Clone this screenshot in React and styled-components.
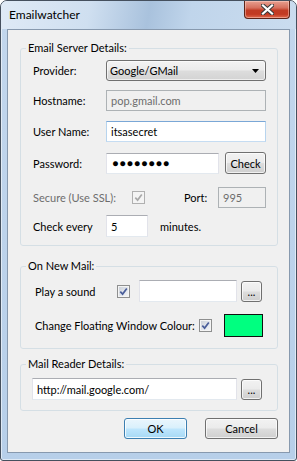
import React from "react";
import styled, { createGlobalStyle, css } from "styled-components";

const GlobalStyle = createGlobalStyle`
  html, body {
    margin: 0;
    padding: 0;
    background: #fff;
  }
  body {
    font-family: "Lato", "Liberation Sans", sans-serif;
    font-size: 11px;
    color: #000;
  }
  * {
    box-sizing: border-box;
  }
`;

const Window = styled.div`
  width: 297px;
  height: 461px;
  border: 1px solid #45505e;
  border-radius: 7px 7px 3px 3px;
  background: linear-gradient(180deg, #c3d7ed 0%, #b7cfe9 100%);
  box-shadow: inset 0 0 0 1px rgba(255, 255, 255, 0.55);
  display: flex;
  flex-direction: column;
  overflow: hidden;
`;

const TitleBar = styled.div`
  height: 28px;
  flex: none;
  display: flex;
  align-items: flex-start;
  justify-content: space-between;
  padding: 0 6px 0 8px;
  background: linear-gradient(100deg, #dfeaf6 0%, #cfdff0 30%, #a9c2dd 50%, #c0d5eb 64%, #cadcef 100%);
`;

const Title = styled.span`
  margin-top: 6px;
  font-size: 12px;
  line-height: 16px;
`;

const CloseButton = styled.div`
  width: 46px;
  height: 18px;
  border: 1px solid #5c2419;
  border-top: none;
  border-radius: 0 0 4px 4px;
  background: linear-gradient(180deg, #e8a090 0%, #d6705e 40%, #c13b24 55%, #c23a22 78%, #e06a4e 100%);
  box-shadow: inset 0 0 0 1px rgba(255, 220, 210, 0.45);
  display: flex;
  align-items: center;
  justify-content: center;
`;

const Frame = styled.div`
  flex: 1;
  display: flex;
  padding: 0 6px 7px 6px;
`;

const Client = styled.div`
  flex: 1;
  border: 1px solid #8799ae;
  background: #f0f0f0;
  padding: 10px 11px 0 12px;
  display: flex;
  flex-direction: column;
`;

const Group = styled.fieldset`
  margin: ${p => p.$mt || 0}px 0 0 0;
  padding: 0;
  min-width: 0;
  border: 1px solid #d5dfe5;
  border-radius: 3px;
`;

const Legend = styled.legend`
  padding: 0 2px;
  margin-left: 5px;
  line-height: 16px;
`;

const GroupBody = styled.div`
  padding: ${p => p.$pad};
  display: flex;
  flex-direction: column;
`;

const Row = styled.div`
  display: flex;
  align-items: center;
  height: ${p => p.$h || 21}px;
  margin-top: ${p => p.$mt || 0}px;
`;

const Label = styled.span`
  flex: none;
  width: ${p => (p.$w ? `${p.$w}px` : "auto")};
  margin-left: ${p => p.$ml || 0}px;
  color: ${p => (p.$disabled ? "#6d6d6d" : "#000")};
  white-space: nowrap;
`;

const TextBox = styled.div`
  flex: none;
  width: ${p => p.$w}px;
  height: ${p => p.$h || 21}px;
  margin-left: ${p => p.$ml || 0}px;
  padding: 0 4px;
  display: flex;
  align-items: center;
  white-space: nowrap;
  overflow: hidden;
  background: #fff;
  border: 1px solid;
  border-color: #abadb3 #e2e3ea #e3e9ef #e2e3ea;
  ${p =>
    p.$state === "disabled" &&
    css`
      background: #f0f0f0;
      border-color: #adb2b5;
      color: #6d6d6d;
    `}
  ${p =>
    p.$state === "hover" &&
    css`
      border-color: #7aa7d6 #b7d4ee #c5dcf2 #b7d4ee;
    `}
`;

const Dots = styled.span`
  font-family: "Liberation Sans", sans-serif;
  font-size: 11.5px;
  letter-spacing: 0.3px;
  margin-left: 1px;
`;

const Combo = styled.div`
  flex: none;
  width: 160px;
  height: 21px;
  padding: 0 6px 0 3px;
  display: flex;
  align-items: center;
  justify-content: space-between;
  border: 1px solid #707070;
  border-radius: 3px;
  background: linear-gradient(180deg, #f3f3f3 0%, #ebebeb 48%, #dddddd 52%, #d3d3d3 100%);
  box-shadow: inset 0 0 0 1px rgba(255, 255, 255, 0.6);
`;

const Button = styled.div`
  flex: none;
  width: ${p => p.$w}px;
  height: ${p => p.$h || 21}px;
  margin-left: ${p => p.$ml || 0}px;
  display: flex;
  align-items: center;
  justify-content: center;
  border: 1px solid #707070;
  border-radius: 3px;
  background: linear-gradient(180deg, #f2f2f2 0%, #ebebeb 48%, #dddddd 52%, #cfcfcf 100%);
  box-shadow: inset 0 0 0 1px rgba(255, 255, 255, 0.7);
  ${p =>
    p.$default &&
    css`
      border-color: #3c7fb1;
      background: linear-gradient(180deg, #eaf6fd 0%, #d9f0fc 48%, #bee6fd 52%, #a7d9f5 100%);
      box-shadow: inset 0 0 0 1px rgba(255, 255, 255, 0.8);
    `}
`;

const Check = styled.span`
  flex: none;
  width: 13px;
  height: 13px;
  margin-left: ${p => p.$ml || 0}px;
  display: flex;
  align-items: center;
  justify-content: center;
  border: 1px solid ${p => (p.$disabled ? "#b0b0b0" : "#8e8f8f")};
  background: ${p =>
    p.$disabled ? "#f4f4f4" : "linear-gradient(135deg, #c9ced6 0%, #e4e8ee 60%, #f7f7f7 100%)"};
  box-shadow: inset 0 0 0 1px #f4f4f4;
`;

const Swatch = styled.div`
  flex: none;
  width: 39px;
  height: 23px;
  margin-left: ${p => p.$ml || 0}px;
  background: #00ff80;
  border: 1px solid #101010;
`;

const ButtonBar = styled.div`
  display: flex;
  justify-content: flex-end;
  gap: 18px;
  margin-top: 7px;
`;

const CheckMark = ({ disabled }) => (
  <svg width="9" height="9" viewBox="0 0 9 9">
    <path
      d="M1.3 4.6 L3.6 7.1 L7.8 1.4"
      fill="none"
      stroke={disabled ? "#a9a9a9" : "#4a5e9a"}
      strokeWidth="1.7"
    />
  </svg>
);

const CloseGlyph = () => (
  <svg width="13" height="11" viewBox="0 0 13 11">
    <path d="M2 1.5 L11 9.5 M11 1.5 L2 9.5" stroke="#3b3b3b" strokeWidth="4.2" strokeLinecap="square" />
    <path d="M2 1.5 L11 9.5 M11 1.5 L2 9.5" stroke="#fff" strokeWidth="2.2" strokeLinecap="square" />
  </svg>
);

const Arrow = () => (
  <svg width="7" height="4" viewBox="0 0 7 4">
    <path d="M0 0 H7 L3.5 4 Z" fill="#000" />
  </svg>
);

const Ellipsis = ({ ml }) => (
  <Button $w={21} $ml={ml}>
    ...
  </Button>
);

export default function App() {
  return (
    <>
      <GlobalStyle />
      <Window>
        <TitleBar>
          <Title>Emailwatcher</Title>
          <CloseButton>
            <CloseGlyph />
          </CloseButton>
        </TitleBar>
        <Frame>
          <Client>
            <Group>
              <Legend>Email Server Details:</Legend>
              <GroupBody $pad="4px 11px 8px 12px">
                <Row>
                  <Label $w={73}>Provider:</Label>
                  <Combo>
                    <span>Google/GMail</span>
                    <Arrow />
                  </Combo>
                </Row>
                <Row $mt={9}>
                  <Label $w={73}>Hostname:</Label>
                  <TextBox $w={160} $state="disabled">pop.gmail.com</TextBox>
                </Row>
                <Row $mt={10}>
                  <Label $w={73}>User Name:</Label>
                  <TextBox $w={160} $state="hover">itsasecret</TextBox>
                </Row>
                <Row $mt={10} $h={22}>
                  <Label $w={73}>Password:</Label>
                  <TextBox $w={113}>
                    <Dots>●●●●●●●●</Dots>
                  </TextBox>
                  <Button $w={41} $h={22} $ml={6}>
                    Check
                  </Button>
                </Row>
                <Row $mt={13}>
                  <Label $w={99} $disabled>
                    Secure (Use SSL):
                  </Label>
                  <Check $disabled>
                    <CheckMark disabled />
                  </Check>
                  <Label $w={34} $ml={39}>
                    Port:
                  </Label>
                  <TextBox $w={48} $state="disabled">
                    995
                  </TextBox>
                </Row>
                <Row $mt={7} $h={22}>
                  <Label $w={73}>Check every</Label>
                  <TextBox $w={42} $h={22}>
                    5
                  </TextBox>
                  <Label $ml={12}>minutes.</Label>
                </Row>
              </GroupBody>
            </Group>

            <Group $mt={12}>
              <Legend>On New Mail:</Legend>
              <GroupBody $pad="6px 11px 11px 14px">
                <Row $h={22}>
                  <Label $w={82}>Play a sound</Label>
                  <Check>
                    <CheckMark />
                  </Check>
                  <TextBox $w={98} $h={22} $ml={9} />
                  <Ellipsis ml={4} />
                </Row>
                <Row $mt={12} $h={23}>
                  <Label $w={164}>Change Floating Window Colour:</Label>
                  <Check>
                    <CheckMark />
                  </Check>
                  <Swatch $ml={12} />
                </Row>
              </GroupBody>
            </Group>

            <Group $mt={7}>
              <Legend>Mail Reader Details:</Legend>
              <GroupBody $pad="6px 11px 10px 11px">
                <Row $h={22}>
                  <TextBox $w={205} $h={22}>
                    http://mail.google.com/
                  </TextBox>
                  <Ellipsis ml={4} />
                </Row>
              </GroupBody>
            </Group>

            <ButtonBar>
              <Button $w={63} $default>
                OK
              </Button>
              <Button $w={73}>Cancel</Button>
            </ButtonBar>
          </Client>
        </Frame>
      </Window>
    </>
  );
}
